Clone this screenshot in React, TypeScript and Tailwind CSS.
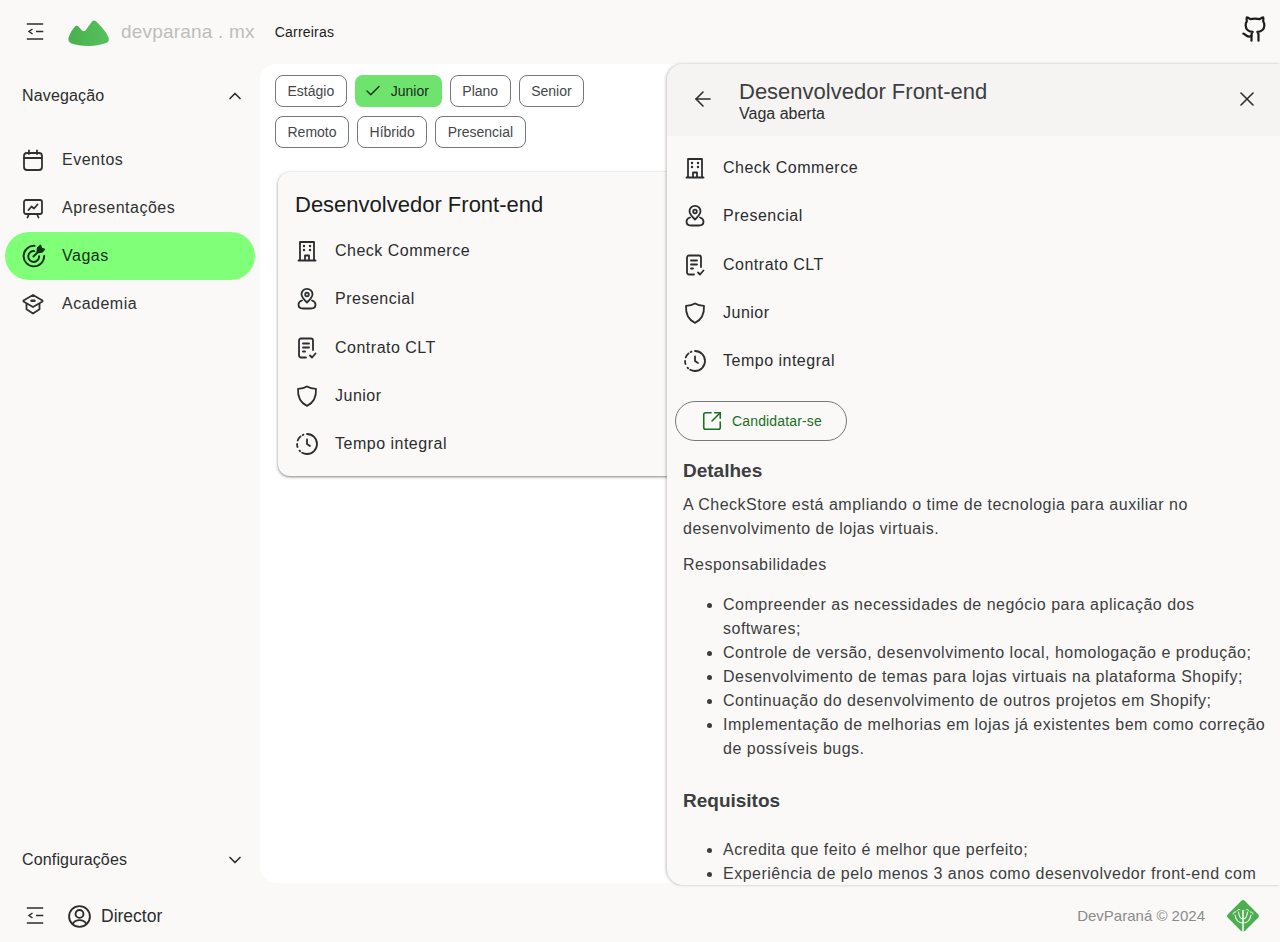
import { Check, X, ArrowLeft, ChevronUp, ChevronDown, SquareArrowOutUpRight } from 'lucide-react'
import type { ReactNode } from 'react'

const stroke = {
  fill: 'none',
  stroke: 'currentColor',
  strokeWidth: 1.8,
  strokeLinecap: 'round' as const,
  strokeLinejoin: 'round' as const,
}

function Icon({ children, size = 24 }: { children: ReactNode; size?: number }) {
  return (
    <svg width={size} height={size} viewBox="0 0 24 24" {...stroke} className="shrink-0">
      {children}
    </svg>
  )
}

const MenuOpen = () => (
  <svg width="24" height="24" viewBox="0 0 24 24" fill="none" stroke="#2b2d2e" strokeWidth="1.5" className="shrink-0">
    <path d="M2.800 4h16.400M12 11.500h7.300M2.800 19h16.400" />
    <path d="M8.500 9 5 11.500 8.500 14" />
  </svg>
)

const CalendarIcon = () => (
  <Icon>
    <rect x="3" y="5" width="18" height="17" rx="3" />
    <path d="M3 10h18M8 2.500V6M16 2.500V6" />
  </Icon>
)

const SlidesIcon = () => (
  <Icon>
    <rect x="3" y="4" width="18" height="14" rx="2" />
    <path d="m7.500 14 3-3.500 2.500 2 3.500-4M8 18l-1.500 3.500M16 18l1.500 3.500" />
  </Icon>
)

const TargetIcon = () => (
  <Icon size={26}>
    <path d="M12.500 2.600A9.500 9.500 0 1 0 21.400 12" />
    <path d="M12.300 7.500A5 5 0 1 0 16.700 12.300" />
    <path d="M11.500 12.500 16.500 7.500" />
    <path d="m15.200 7.800.4-3.300 2.300-2.100.8 2.700 2.700.8-2.200 2.300-3.200.4Z" fill="currentColor" />
  </Icon>
)

const SchoolIcon = () => (
  <Icon>
    <path d="M12 3 2.500 8.500v1L12 15l9.500-5.500v-1Z" />
    <path d="M5.500 12v5.200L12 21.500l6.500-4.300V12" />
    <path d="M10.500 8.800h3" strokeWidth={2.400} />
  </Icon>
)

const BuildingIcon = () => (
  <Icon>
    <path d="M5 21.500V3h14v18.500M3.500 21.500h17" />
    <path d="M10 21v-4.500h4V21" />
    <path d="M9 7h.01M15 7h.01M9 11h.01M15 11h.01" strokeWidth={2.400} />
  </Icon>
)

const PinIcon = () => (
  <Icon>
    <path d="M12 15.500c-3.200-3-5.500-5.200-5.500-8.200a5.500 5.500 0 0 1 11 0c0 3-2.300 5.200-5.500 8.200Z" />
    <circle cx="12" cy="7.500" r="1.800" />
    <path d="M7 13.500C4.800 14.300 3.500 15.800 3.500 17.500c0 2.500 2 4 4.500 4h8c2.500 0 4.500-1.500 4.500-4 0-1.700-1.300-3.200-3.500-4" />
  </Icon>
)

const ContractIcon = () => (
  <Icon>
    <path d="M11 21.500H6a2 2 0 0 1-2-2v-15a2 2 0 0 1 2-2h10a2 2 0 0 1 2 2V14" />
    <path d="M8 7.500h6M8 11.500h6M8 15.500h2" />
    <path d="m15 19.500 2 2 3.500-4" />
  </Icon>
)

const ShieldIcon = () => (
  <Icon>
    <path d="M12 2.500c2.300 1.500 5 2.300 9 2.300.4 8.500-2 14-9 17C5 18.800 2.600 13.300 3 4.800c4 0 6.700-.8 9-2.300Z" />
  </Icon>
)

const ClockIcon = () => (
  <Icon>
    <path d="M12 2a10 10 0 0 1 0 20" />
    <path d="M12 22a10 10 0 0 1-7.500-3.400M2.500 15a10 10 0 0 1-.4-3M2.700 8.500A10 10 0 0 1 8.500 2.700" strokeDasharray="5 2.500" />
    <path d="M12 7.500V12l3 2" />
  </Icon>
)

const UserCircle = () => (
  <Icon size={25}>
    <circle cx="12" cy="12" r="10" />
    <circle cx="12" cy="9.500" r="3.800" />
    <path d="M5.500 19c1.500-2.500 3.800-3.500 6.500-3.500s5 1 6.500 3.500" />
  </Icon>
)

const GithubIcon = () => (
  <svg width="28" height="28" viewBox="0 0 24 24" fill="none" stroke="#1c1c1c" strokeWidth="1.900" strokeLinecap="round" strokeLinejoin="round">
    <path d="M15 22v-4a4.800 4.800 0 0 0-1-3.500c3 0 6-2 6-5.500.1-1.250-.25-2.480-1-3.500.28-1.150.28-2.350 0-3.500 0 0-1 0-3 1.500-2.640-.5-5.360-.5-8 0C6 2 5 2 5 2c-.3 1.150-.3 2.350 0 3.500A5.400 5.400 0 0 0 4 9c0 3.500 3 5.500 6 5.500-.39.490-.68 1.050-.85 1.650-.17.600-.22 1.230-.15 1.850v4" />
    <path d="M9 18c-4.510 2-5-2-7-2" />
  </svg>
)

const Logo = () => (
  <svg width="42" height="27" viewBox="0 0 42 27" className="mt-[3px]">
    <defs>
      <linearGradient id="mountain" x1="0" y1="0" x2="1" y2="0">
        <stop offset="0" stopColor="#48b04e" />
        <stop offset="1" stopColor="#56c25c" />
      </linearGradient>
    </defs>
    <path d="M.5 18C2 13 4.500 9 7 6.500 8 5.500 9.500 5.500 10.500 6.500L14 10.500c1 1 2.500 1 3.500 0L24 1.500c1-1.300 3-1.300 4.200 0C33 6 38.500 12 40.500 17.500 41.500 20.500 40.500 22 38 23 32 25 27 26 20.500 26 14 26 8 25 3.500 23.500 1 22.500 0 20.500.5 18Z" fill="url(#mountain)" />
  </svg>
)

const TreeBadge = () => (
  <svg width="34" height="34" viewBox="0 0 34 34" fill="none">
    <rect x="5" y="5" width="24" height="24" rx="3" transform="rotate(45 17 17)" fill="#4cae50" />
    <path d="M17 33V11" stroke="#f2f8f1" strokeWidth="1.600" />
    <path d="M17 24c-4 0-7-2-8-8M17 24c4 0 7-2 8-8M17 20c-2.500 0-4-2-4.500-7M17 20c2.500 0 4-2 4.500-7" stroke="#eaf6ea" strokeWidth="1.200" strokeLinecap="round" />
    <path d="M7 15c.3-1.800 1.500-2.500 2.800-2M27 15c-.3-1.800-1.500-2.500-2.800-2M11 12c.5-1.500 2-2 3-1.200M23 12c-.5-1.500-2-2-3-1.200" stroke="#eaf6ea" strokeWidth="1" strokeLinecap="round" />
  </svg>
)

const navItems = [
  { label: 'Eventos', icon: <CalendarIcon /> },
  { label: 'Apresentações', icon: <SlidesIcon /> },
  { label: 'Vagas', icon: <TargetIcon />, active: true },
  { label: 'Academia', icon: <SchoolIcon /> },
]

const jobRows = [
  { label: 'Check Commerce', icon: <BuildingIcon /> },
  { label: 'Presencial', icon: <PinIcon /> },
  { label: 'Contrato CLT', icon: <ContractIcon /> },
  { label: 'Junior', icon: <ShieldIcon /> },
  { label: 'Tempo integral', icon: <ClockIcon /> },
]

function Chip({ label, selected }: { label: string; selected?: boolean }) {
  if (selected) {
    return (
      <span className="flex h-8 items-center gap-[9px] rounded-lg bg-[#6ee46f] pl-[9px] pr-[13px] text-sm text-[#1c2b1c]">
        <Check size={18} strokeWidth={1.8} />
        {label}
      </span>
    )
  }
  return (
    <span className="flex h-8 items-center rounded-lg border border-[#77787a] px-[11.5px] text-sm text-[#44474a]">
      {label}
    </span>
  )
}

function JobRows() {
  return (
    <>
      {jobRows.map(row => (
        <div key={row.label} className="flex h-[48.25px] items-center gap-4 text-[#2b2d2e]">
          {row.icon}
          <span className="text-base tracking-[0.5px]">{row.label}</span>
        </div>
      ))}
    </>
  )
}

export default function App() {
  return (
    <div className="flex h-[942px] w-[1280px] flex-col overflow-hidden bg-[#faf9f7] font-['Liberation_Sans',Arial,sans-serif] text-[#1c1c1c]">
      {/* Header */}
      <header className="flex h-16 shrink-0 items-center pl-6 pr-[11px]">
        <div className="-mt-px">
          <MenuOpen />
        </div>
        <div className="ml-5 flex items-center gap-[11px]">
          <Logo />
          <span className="text-[19px] tracking-[0.2px] text-[#bdbdbc]">devparana . mx</span>
        </div>
        <span className="ml-5 text-sm tracking-[0.2px] text-[#1c1c1c]">Carreiras</span>
        <div className="ml-auto -mt-[7px]">
          <GithubIcon />
        </div>
      </header>

      <div className="flex min-h-0 flex-1">
        {/* Sidebar */}
        <aside className="flex w-[260px] shrink-0 flex-col">
          <div className="flex h-[63px] items-center justify-between pl-[22px] pr-[15px] text-base text-[#2b2d2e]">
            <span className="tracking-[0.15px]">Navegação</span>
            <ChevronUp size={20} strokeWidth={2} />
          </div>
          <nav className="mt-[9px] flex flex-col pl-[5px] pr-[5px]">
            {navItems.map(item => (
              <div
                key={item.label}
                className={`flex h-12 items-center rounded-full pl-4 text-base tracking-[0.5px] ${
                  item.active ? 'gap-[15px] bg-[#80ff78] text-[#12301a]' : 'gap-[17px] text-[#2f3133]'
                }`}
              >
                {item.icon}
                <span>{item.label}</span>
              </div>
            ))}
          </nav>
          <div className="-mb-px mt-auto flex h-12 items-center justify-between pl-[22px] pr-[15px] text-base text-[#2b2d2e]">
            <span className="tracking-[0.15px]">Configurações</span>
            <ChevronDown size={20} strokeWidth={2} />
          </div>
        </aside>

        {/* Main */}
        <main className="relative min-w-0 flex-1 rounded-2xl bg-white">
          <div className="flex flex-col gap-[9px] pl-[15px] pt-[11px]">
            <div className="flex gap-2">
              <Chip label="Estágio" />
              <Chip label="Junior" selected />
              <Chip label="Plano" />
              <Chip label="Senior" />
            </div>
            <div className="flex gap-2">
              <Chip label="Remoto" />
              <Chip label="Híbrido" />
              <Chip label="Presencial" />
            </div>
          </div>

          <div className="ml-[18px] mt-6 h-[304px] w-[600px] rounded-xl bg-[#faf9f8] pl-[17px] pt-[19px] shadow-[0_1px_2px_rgba(0,0,0,0.3),0_1px_3px_1px_rgba(0,0,0,0.15)]">
            <h2 className="text-[22px] leading-7 text-[#1c1c1c]">Desenvolvedor Front-end</h2>
            <div className="mt-2">
              <JobRows />
            </div>
          </div>

          {/* Detail panel */}
          <section className="absolute bottom-[-2px] right-0 top-0 flex w-[613px] flex-col overflow-hidden rounded-l-2xl bg-[#faf9f8] shadow-[-1px_0_3px_rgba(0,0,0,0.25)]">
            <div className="flex h-[72px] shrink-0 items-center bg-[#f5f4f3] pl-6 pr-[21px]">
              <ArrowLeft size={24} strokeWidth={1.6} className="-mt-[2px] text-[#2b2d2e]" />
              <div className="ml-6 flex flex-col pt-[2px]">
                <span className="text-[22px] leading-7 text-[#3c3e40]">Desenvolvedor Front-end</span>
                <span className="-mt-[2px] text-base leading-5 text-[#2b2d2e]">Vaga aberta</span>
              </div>
              <X size={24} strokeWidth={1.6} className="-mt-[2px] ml-auto text-[#2b2d2e]" />
            </div>

            <div className="min-h-0 flex-1 overflow-hidden">
              <div className="pl-4 pt-2">
                <JobRows />
              </div>
              <button className="ml-2 mt-4 flex h-10 w-[172px] items-center gap-[9px] rounded-full border border-[#77787a] pl-[25px] text-sm tracking-[0.15px] text-[#1b6e24]">
                <SquareArrowOutUpRight size={22} strokeWidth={1.7} />
                Candidatar-se
              </button>

              <div className="pl-4 pr-3 text-base leading-6 tracking-[0.5px] text-[#3c3e40]">
                <h3 className="mt-[18px] text-[19px] font-bold tracking-normal">Detalhes</h3>
                <p className="mt-[10px]">
                  A CheckStore está ampliando o time de tecnologia para auxiliar no desenvolvimento de lojas virtuais.
                </p>
                <p className="mt-3">Responsabilidades</p>
                <ul className="mt-4 list-disc pl-10">
                  <li>Compreender as necessidades de negócio para aplicação dos softwares;</li>
                  <li>Controle de versão, desenvolvimento local, homologação e produção;</li>
                  <li>Desenvolvimento de temas para lojas virtuais na plataforma Shopify;</li>
                  <li>Continuação do desenvolvimento de outros projetos em Shopify;</li>
                  <li>Implementação de melhorias em lojas já existentes bem como correção de possíveis bugs.</li>
                </ul>
                <h3 className="mt-[28px] text-[19px] font-bold tracking-normal">Requisitos</h3>
                <ul className="mt-[25px] list-disc pl-10">
                  <li>Acredita que feito é melhor que perfeito;</li>
                  <li>Experiência de pelo menos 3 anos como desenvolvedor front-end com</li>
                </ul>
              </div>
            </div>
          </section>
        </main>
      </div>

      {/* Footer */}
      <footer className="flex h-[59px] shrink-0 items-center pl-6 pr-5 pt-[7px]">
        <MenuOpen />
        <div className="ml-[19px] flex items-center gap-[9px] text-[17.5px] text-[#2b2d2e]">
          <UserCircle />
          <span>Director</span>
        </div>
        <div className="ml-auto flex items-center gap-[21px]">
          <span className="text-[15px] text-[#8a8b8b]">DevParaná © 2024</span>
          <TreeBadge />
        </div>
      </footer>
    </div>
  )
}
